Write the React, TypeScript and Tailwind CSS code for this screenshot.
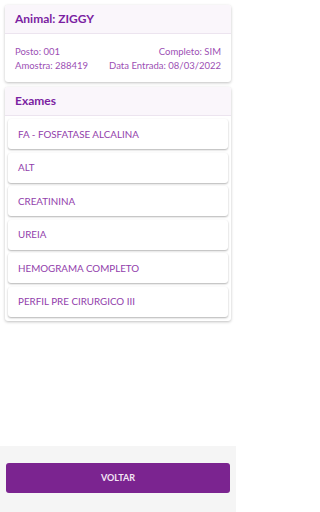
const exames = [
  'FA - FOSFATASE ALCALINA',
  'ALT',
  'CREATININA',
  'UREIA',
  'HEMOGRAMA COMPLETO',
  'PERFIL PRE CIRURGICO III',
];

export default function App() {
  return (
    <div
      className="flex h-[512px] w-[236px] flex-col bg-white"
      style={{ fontFamily: 'Lato, "Noto Sans", sans-serif' }}
    >
      <div className="flex-1 px-[5px] pt-[5px]">
        <div className="overflow-hidden rounded-[3px] bg-white shadow-[0_1px_3px_rgba(0,0,0,0.25)]">
          <div className="flex h-[29px] items-center border-b border-[#ece4ef] bg-[#faf6fb] px-[10px] text-[12px] font-bold text-[#7b1fa2]">
            Animal: ZIGGY
          </div>
          <div className="flex flex-col gap-[2px] px-[10px] pb-[10px] pt-[12px] text-[9.5px] leading-[12px] text-[#9c4fb4]">
            <div className="flex justify-between">
              <span>Posto: 001</span>
              <span>Completo: SIM</span>
            </div>
            <div className="flex justify-between">
              <span>Amostra: 288419</span>
              <span>Data Entrada: 08/03/2022</span>
            </div>
          </div>
        </div>

        <div className="mt-[5px] overflow-hidden rounded-[3px] bg-white shadow-[0_1px_3px_rgba(0,0,0,0.25)]">
          <div className="flex h-[29px] items-center border-b border-[#ece4ef] bg-[#faf6fb] px-[10px] text-[12px] font-bold text-[#7b1fa2]">
            Exames
          </div>
          <div className="flex flex-col gap-[3.5px] px-[3px] pb-[4px] pt-[3px]">
            {exames.map((e) => (
              <div
                key={e}
                className="flex h-[30px] items-center rounded-[3px] bg-white px-[10px] text-[9.8px] text-[#9240ab] shadow-[0_1px_2px_rgba(0,0,0,0.3)]"
              >
                {e}
              </div>
            ))}
          </div>
        </div>
      </div>

      <div className="flex h-[66px] items-start bg-[#f5f5f5] px-[6px] pt-[17px]">
        <button className="flex h-[30px] w-full items-center justify-center rounded-[3px] bg-[#7b2490] text-[9px] font-bold text-[#f3e6f5]">
          VOLTAR
        </button>
      </div>
    </div>
  );
}
